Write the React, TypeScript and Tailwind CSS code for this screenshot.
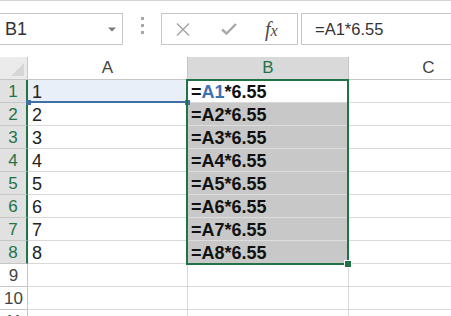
import React from 'react';

const rows = Array.from({ length: 11 }, (_, i) => i + 1);

export default function App() {
  return (
    <div className="w-[451px] h-[316px] overflow-hidden bg-white relative font-['Liberation_Sans',Arial,sans-serif]">
      {/* Formula bar */}
      <div className="h-[57px] border-t border-[#d4d4d4] flex items-start pt-[12px]">
        <div className="w-[123px] h-[32px] shrink-0 border border-l-0 border-[#c6c6c6] flex items-center justify-between pl-[5px] pr-[6px]">
          <span className="text-[18px] text-[#333] leading-none">B1</span>
          <svg width="8" height="5" viewBox="0 0 8 5">
            <path d="M0 0.5h8L4 4.5z" fill="#7a7a7a" />
          </svg>
        </div>
        <div className="w-[38px] h-[32px] shrink-0 flex flex-col items-center pt-[4px] gap-[4px]">
          <div className="w-[3px] h-[3px] bg-[#a8a8a8]" />
          <div className="w-[3px] h-[3px] bg-[#a8a8a8]" />
          <div className="w-[3px] h-[3px] bg-[#a8a8a8]" />
        </div>
        <div className="w-[137px] h-[32px] shrink-0 border border-[#c6c6c6] flex items-center pl-[14px]">
          <svg width="14" height="13" viewBox="0 0 14 13">
            <path d="M1 0.5L13 12.5M13 0.5L1 12.5" stroke="#a3a3a3" strokeWidth="1.4" />
          </svg>
          <svg width="16" height="12" viewBox="0 0 16 12" className="ml-[31px]">
            <path d="M1 6.5L5.5 10.5L15 1" stroke="#a8a8a8" strokeWidth="2.4" fill="none" />
          </svg>
          <span className="ml-[28px] font-['Liberation_Serif',serif] italic text-[#4a4a4a] leading-none">
            <span className="text-[20px]">f</span>
            <span className="text-[16px]">x</span>
          </span>
        </div>
        <div className="ml-[3px] flex-1 h-[32px] border border-r-0 border-[#c6c6c6] flex items-center pl-[13px] text-[16.5px] text-[#333]">
          =A1*6.55
        </div>
      </div>

      {/* Sheet */}
      <div className="relative">
        <div className="grid grid-cols-[28px_160px_161px_160px] auto-rows-[23px]">
          {/* header row */}
          <div className="bg-[#ebebeb] border-b border-r border-[#c6c6c6] flex items-end justify-end p-[2px]">
            <svg width="14" height="14" viewBox="0 0 14 14">
              <path d="M13 0V13H0z" fill="#d6d6d6" />
            </svg>
          </div>
          <div className="border-b border-r border-[#c6c6c6] flex items-center justify-center text-[17px] text-[#444]">A</div>
          <div className="bg-[#d9d9d9] border-b border-r border-[#c6c6c6] flex items-center justify-center text-[17px] text-[#217346]">B</div>
          <div className="border-b border-r border-[#c6c6c6] flex items-center justify-center text-[17px] text-[#444]">C</div>

          {rows.map((r) => {
            const sel = r <= 8;
            return (
              <React.Fragment key={r}>
                <div
                  className={
                    sel
                      ? 'bg-[#e1e1e1] border-b border-[#c6c6c6] border-r-2 border-r-[#217346] flex items-center justify-center text-[17px] text-[#217346] pt-[1px]'
                      : 'border-b border-r border-[#c6c6c6] flex items-center justify-center text-[17px] text-[#444] pt-[1px]'
                  }
                >
                  {r}
                </div>
                <div
                  className={
                    (r === 1 ? 'bg-[#e8eff8] ' : '') +
                    'border-b border-r border-[#d9d9d9] flex items-center pl-[4px] pt-[2px] text-[18px] text-[#222]'
                  }
                >
                  {sel ? r : ''}
                </div>
                <div
                  className={
                    (sel && r > 1 ? 'bg-[#c8c8c8] border-[#dedede] ' : 'border-[#d9d9d9] ') +
                    'border-b border-r flex items-center pl-[3px] pt-[2px] text-[18px] font-bold text-[#111]'
                  }
                >
                  {sel ? (
                    r === 1 ? (
                      <span>
                        =<span className="text-[#3e72b3]">A1</span>*6.55
                      </span>
                    ) : (
                      `=A${r}*6.55`
                    )
                  ) : (
                    ''
                  )}
                </div>
                <div className="border-b border-r border-[#d9d9d9]" />
              </React.Fragment>
            );
          })}
        </div>

        {/* A1 reference highlight */}
        <div className="absolute left-[28px] top-[44px] w-[160px] h-[2px] bg-[#3f6fa6]" />
        <div className="absolute left-[26px] top-[43px] w-[5px] h-[5px] bg-[#3f6fa6]" />
        <div className="absolute left-[185px] top-[43px] w-[5px] h-[5px] bg-[#3f6fa6]" />

        {/* Selection border */}
        <div className="absolute left-[186px] top-[22px] w-[163px] h-[186px] border-2 border-[#217346]" />
        {/* Fill handle */}
        <div className="absolute left-[344px] top-[203px] w-[8px] h-[8px] bg-[#217346] border border-white" />
      </div>
    </div>
  );
}
